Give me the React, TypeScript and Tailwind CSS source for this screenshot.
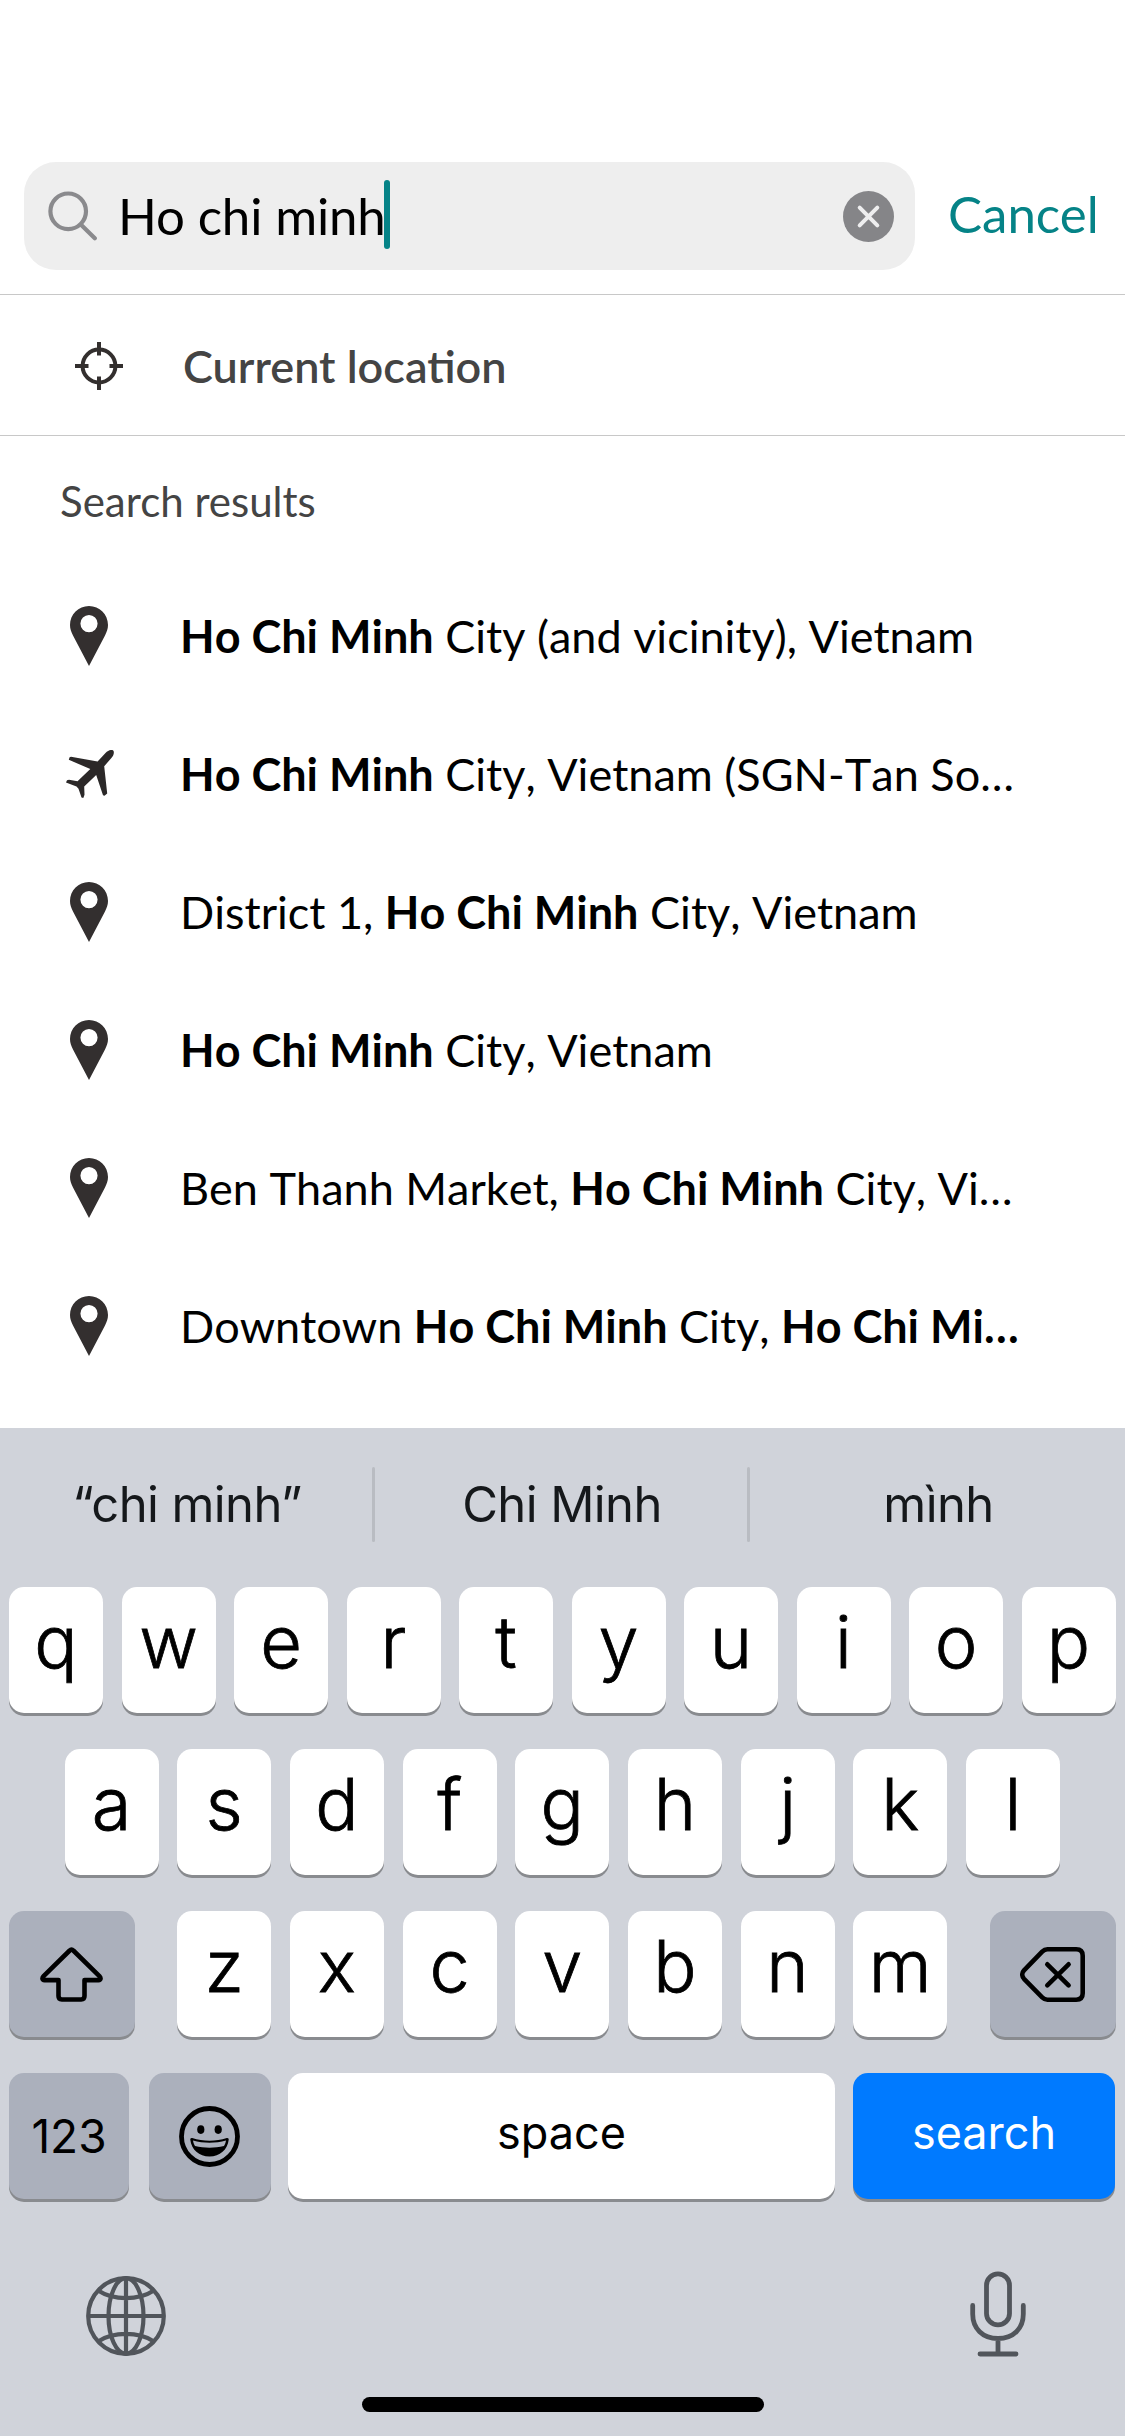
import React from 'react';
import clsx from 'clsx';

interface Segment {
  text: string;
  bold?: boolean;
}

interface Result {
  id: number;
  kind: 'place' | 'airport';
  segments: Segment[];
}

const QUERY = 'Ho Chi Minh';

const RESULTS: Result[] = [
  { id: 1, kind: 'place', segments: [{ text: QUERY, bold: true }, { text: ' City (and vicinity), Vietnam' }] },
  { id: 2, kind: 'airport', segments: [{ text: QUERY, bold: true }, { text: ' City, Vietnam (SGN-Tan So…' }] },
  { id: 3, kind: 'place', segments: [{ text: 'District 1, ' }, { text: QUERY, bold: true }, { text: ' City, Vietnam' }] },
  { id: 4, kind: 'place', segments: [{ text: QUERY, bold: true }, { text: ' City, Vietnam' }] },
  { id: 5, kind: 'place', segments: [{ text: 'Ben Thanh Market, ' }, { text: QUERY, bold: true }, { text: ' City, Vi…' }] },
  { id: 6, kind: 'place', segments: [{ text: 'Downtown ' }, { text: QUERY, bold: true }, { text: ' City, ' }, { text: 'Ho Chi Mi…', bold: true }] },
];

function SearchIcon() {
  return (
    <svg className="w-[50px] h-[50px]" viewBox="0 0 50 50" fill="none" stroke="#8a8a8d" strokeWidth="4.2" strokeLinecap="round">
      <circle cx="20.2" cy="20.3" r="17.8" />
      <path d="M32.8 33.5L46.8 47.3" />
    </svg>
  );
}

function ClearIcon() {
  return (
    <svg className="w-[51px] h-[51px]" viewBox="0 0 51 51">
      <circle cx="25.5" cy="25.5" r="25.5" fill="#858588" />
      <path d="M16.7 16.7l17.6 17.6M34.3 16.7L16.7 34.3" stroke="#eeeeef" strokeWidth="4" strokeLinecap="round" />
    </svg>
  );
}

function TargetIcon() {
  return (
    <svg className="w-12 h-12" viewBox="0 0 48 48" fill="none" stroke="#332f2e" strokeWidth="4">
      <circle cx="24" cy="24" r="16.4" />
      <path d="M24 0v13.5M24 34.5V48M0 24h13.5M34.5 24H48" />
    </svg>
  );
}

function PinIcon() {
  return (
    <svg className="w-[38px] h-[60px] mr-[2px]" viewBox="0 0 38 60" fill="#332f2f">
      <path
        fillRule="evenodd"
        d="M19 0C8.500 0 0 8.500 0 19c0 3.800 1.200 6.900 3 10.500L19 60l16-30.500c1.800-3.600 3-6.700 3-10.500C38 8.500 29.500 0 19 0zM19 9a8.600 8.600 0 1 1 0 17.200A8.600 8.600 0 0 1 19 9z"
      />
    </svg>
  );
}

function PlaneIcon() {
  return (
    <svg className="w-12 h-12" viewBox="0 0 48 48" fill="#2b2828">
      <path d="M47.200.4c1.300 1.400.6 4.800-1.600 7.400L38.200 16.200 41.200 43.400 38.500 45.800 37 45.200 30.200 25 18.200 36.600 18.500 44.800 17.300 48 15.500 47.500 12.500 38.800 10.500 36.600 0 32.600 1 30.200 3 29.800 11.500 31.300 24.300 19 2.800 9.800 3.600 7.300 5 6.800 31.600 11.500 39.500 3C42.200.3 45.700-.8 47.200.4z" />
    </svg>
  );
}

function ShiftIcon() {
  return (
    <svg className="w-[63px] h-[55px] mr-px" viewBox="0 0 63 55" fill="none" stroke="#000" strokeWidth="4.600" strokeLinejoin="round">
      <path d="M29.700 3.500L3.600 29.200c-1.800 1.900-1.500 3.900.9 3.900h14v16c0 2.200 1.100 3.400 3.300 3.400h19.400c2.200 0 3.300-1.200 3.300-3.400v-16h14c2.400 0 2.700-2 .9-3.900L33.300 3.500c-1.200-1.300-2.400-1.300-3.600 0z" />
    </svg>
  );
}

function BackspaceIcon() {
  return (
    <svg className="w-[65px] h-[55px]" viewBox="0 0 65 55" fill="none" stroke="#000" strokeWidth="4.600" strokeLinecap="round" strokeLinejoin="round">
      <path d="M27.500 2.300h28.700c4.300 0 6.500 2.200 6.500 6.400v37.600c0 4.200-2.200 6.400-6.500 6.400H27.500c-2.200 0-3.700-.7-5.300-2.300L4 31.800c-2.300-2.500-2.300-5.900 0-8.400L22.200 4.600c1.600-1.600 3.100-2.300 5.300-2.300z" />
      <path d="M27.300 17.300l21.300 21M48.600 17.300l-21.300 21" />
    </svg>
  );
}

function EmojiIcon() {
  return (
    <svg className="w-[61px] h-[61px] mr-px" viewBox="0 0 61 61">
      <circle cx="30.500" cy="30.500" r="28" fill="none" stroke="#000" strokeWidth="4.800" />
      <ellipse cx="21.800" cy="23.600" rx="3.600" ry="4.300" />
      <ellipse cx="39.200" cy="23.600" rx="3.600" ry="4.300" />
      <path d="M13.200 32c11 3.700 23.600 3.700 34.600 0 1.400-.3 2 .5 1.900 1.800C48.600 43.800 40.900 50.500 30.500 50.500S12.400 43.800 11.300 33.800c-.1-1.300.5-2.100 1.900-1.800z" />
      <path d="M14 34.600c10.500 3 22.500 3 33 0-.3 2.200-1 4-2 5.400-9.500 2.200-19.500 2.200-29 0-1-1.400-1.700-3.200-2-5.400z" fill="#abb0bc" />
    </svg>
  );
}

function GlobeIcon() {
  return (
    <svg className="w-20 h-20" viewBox="0 0 80 80" fill="none" stroke="#51555b" strokeWidth="4.200">
      <circle cx="40" cy="40" r="37.800" />
      <ellipse cx="40" cy="40" rx="17.500" ry="37.800" />
      <path d="M40 2v76M2 40h76M12.500 14.800c15 9.800 40 9.800 55 0M12.500 65.200c15-9.800 40-9.800 55 0" />
    </svg>
  );
}

function MicIcon() {
  return (
    <svg className="w-14 h-[86px]" viewBox="0 0 56 86" fill="none" stroke="#51555b" strokeWidth="4.800" strokeLinecap="round">
      <rect x="16.500" y="2.900" width="23" height="51" rx="11.500" />
      <path d="M2.700 34.500V43c0 14.500 10 24.500 25.300 24.500S53.300 57.500 53.300 43v-8.500M28 68v14.500M10 83h36" />
    </svg>
  );
}

interface KeyProps {
  className?: string;
  tone?: 'light' | 'dark' | 'blue';
  children: React.ReactNode;
}

function Key({ className, tone = 'light', children }: KeyProps) {
  return (
    <button
      type="button"
      className={clsx(
        'flex items-center justify-center h-[126px] rounded-[15px] shadow-[0_3px_0_#898b8f]',
        tone === 'light' && 'bg-white text-black',
        tone === 'dark' && 'bg-[#abb0bc] text-black',
        tone === 'blue' && 'bg-[#007aff] text-white',
        className,
      )}
    >
      {children}
    </button>
  );
}

function LetterKeys({ letters }: { letters: string }) {
  return (
    <>
      {letters.split('').map(letter => (
        <Key key={letter} className="w-[94px] pb-4 text-[72px] font-light [-webkit-text-stroke:0.8px_black]">
          {letter}
        </Key>
      ))}
    </>
  );
}

function Keyboard() {
  return (
    <div className="h-[1008px] bg-[#d0d3da] font-['Inter',sans-serif]">
      <div className="flex items-center h-[159px] pb-1.5 text-[49px] tracking-[-0.6px] text-[#15181b]">
        <div className="w-[372px] pl-0.5 text-center">“chi minh”</div>
        <div className="w-[3px] h-[75px] rounded-full bg-[#b9bcc2]" />
        <div className="w-[372px] pl-0.5 text-center">Chi Minh</div>
        <div className="w-[3px] h-[75px] rounded-full bg-[#b9bcc2]" />
        <div className="flex-1 pl-0.5 text-center">mình</div>
      </div>

      <div className="flex flex-col gap-9 pl-[9px] pr-[9.5px]">
        <div className="flex justify-between">
          <LetterKeys letters="qwertyuiop" />
        </div>
        <div className="flex justify-between pl-[55.5px] pr-[55.5px]">
          <LetterKeys letters="asdfghjkl" />
        </div>
        <div className="flex justify-between">
          <Key tone="dark" className="w-[126px]"><ShiftIcon /></Key>
          <div className="flex justify-between w-[770px]">
            <LetterKeys letters="zxcvbnm" />
          </div>
          <Key tone="dark" className="w-[126px]"><BackspaceIcon /></Key>
        </div>
        <div className="flex">
          <Key tone="dark" className="w-[120px] text-[46px]">123</Key>
          <Key tone="dark" className="w-[122px] ml-5"><EmojiIcon /></Key>
          <Key className="w-[547px] ml-[17px] pb-1.5 text-[45px]">space</Key>
          <Key tone="blue" className="w-[262px] ml-[18px] pb-1.5 text-[45px]">search</Key>
        </div>
      </div>

      <div className="flex justify-between pl-[86px] pr-[99px] pt-[72px] h-[198px]">
        <div className="pt-[5px]"><GlobeIcon /></div>
        <MicIcon />
      </div>
      <div className="w-[402px] h-[15px] mx-auto rounded-full bg-black" />
    </div>
  );
}

export default function App() {
  return (
    <div className="w-[1125px] h-[2436px] overflow-hidden bg-white font-['Lato',sans-serif] text-black">
      <header className="flex h-[295px] pt-[162px] pl-6 border-b border-[#c8c8c8]">
        <div className="flex items-center w-[891px] h-[108px] pl-6 pr-[21px] rounded-[32px] bg-[#eeeeee]">
          <SearchIcon />
          <span className="ml-5 text-[51px] tracking-[-0.15px]">Ho chi minh</span>
          <div className="w-1.5 h-[69px] -ml-0.5 mb-[3px] rounded-full bg-[#058387]" />
          <div className="ml-auto"><ClearIcon /></div>
        </div>
        <button type="button" className="h-[105px] ml-[33px] text-[51px] text-[#058387]">Cancel</button>
      </header>

      <div className="flex items-center h-[141px] pt-0.5 pl-[75px] border-b border-[#c8c8c8]">
        <TargetIcon />
        <span className="ml-[60px] pt-0.5 text-[45px] font-semibold text-[#444444]">Current location</span>
      </div>

      <section className="h-[992px]">
        <h2 className="flex items-center h-[131px] pl-[60px] text-[42px] text-[#444444]">
          <span>Search results</span>
        </h2>
        <ul>
          {RESULTS.map(result => (
            <li key={result.id} className="flex items-center h-[138px] text-[45px] whitespace-pre [font-kerning:none]">
              <div className="flex justify-center w-[180px]">
                {result.kind === 'airport' ? <PlaneIcon /> : <PinIcon />}
              </div>
              <div className="pt-0.5">
                {result.segments.map((segment, i) => (
                  <span key={i} className={segment.bold ? 'font-bold' : undefined}>{segment.text}</span>
                ))}
              </div>
            </li>
          ))}
        </ul>
      </section>

      <Keyboard />
    </div>
  );
}
